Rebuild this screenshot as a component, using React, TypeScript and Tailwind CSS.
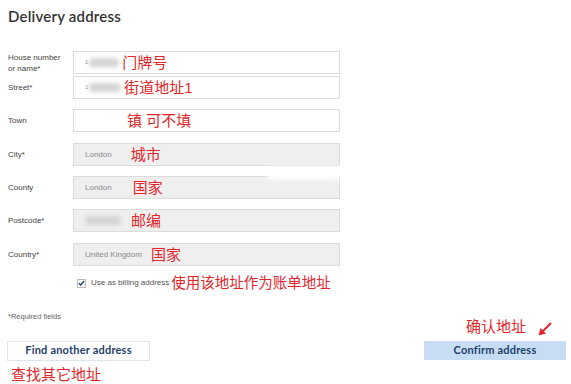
const label = 'w-[65px] shrink-0 text-[8px] leading-[11px] text-[#444]';
const box = 'w-[267px] h-[23px] border border-[#dcdcdc] flex items-center pl-[11px]';
const note = 'text-[15px] leading-none text-[#e3262b]';
const grey = 'text-[8px] text-[#8a8a8a]';
const cjk = { fontFamily: '"Noto Sans CJK SC", sans-serif' };

function Blob({ w }: { w: number }) {
  return <div className="h-[9px] rounded-sm bg-[#d4d4d4] blur-[2px]" style={{ width: w }} />;
}

export default function App() {
  return (
    <div className="relative w-[571px] h-[384px] bg-white overflow-hidden" style={{ fontFamily: '"Liberation Sans", Arial, sans-serif' }}>
      <div className="pl-2 pr-[5px] pt-[6px]">
        <h1 className="text-[15px] font-semibold text-[#333] leading-5 tracking-[0.2px]" style={{ fontFamily: 'Lato, sans-serif' }}>Delivery address</h1>

        <div className="mt-[25px] flex flex-col" style={{ fontFamily: '"Liberation Sans", "Noto Sans CJK SC", sans-serif' }}>
          <div className="flex items-center">
            <div className={label}>House number<br />or name*</div>
            <div className={`${box} bg-white`}>
              <span className="text-[6px] text-[#999] mr-[1px]">1</span>
              <Blob w={30} />
              <span className={`${note} ml-[3px]`}>门牌号</span>
            </div>
          </div>
          <div className="flex items-center mt-[2px]">
            <div className={label}>Street*</div>
            <div className={`${box} bg-white`}>
              <span className="text-[6px] text-[#999] mr-[1px]">1</span>
              <Blob w={32} />
              <span className={`${note} ml-[3px]`}>街道地址1</span>
            </div>
          </div>
          <div className="flex items-center mt-[10px]">
            <div className={label}>Town</div>
            <div className={`${box} bg-white pl-[53px]`}>
              <span className={note}>镇 可不填</span>
            </div>
          </div>
          <div className="flex items-center mt-[11px]">
            <div className={label}>City*</div>
            <div className={`${box} bg-[#efefef]`}>
              <span className={grey}>London</span>
              <span className={`${note} ml-[19px]`}>城市</span>
            </div>
          </div>
          <div className="flex items-center mt-[10px]">
            <div className={label}>County</div>
            <div className={`${box} bg-[#efefef]`}>
              <span className={grey}>London</span>
              <span className={`${note} ml-[21px]`}>国家</span>
            </div>
          </div>
          <div className="flex items-center mt-[10px]">
            <div className={label}>Postcode*</div>
            <div className={`${box} bg-[#efefef]`}>
              <Blob w={36} />
              <span className={`${note} ml-[10px]`}>邮编</span>
            </div>
          </div>
          <div className="flex items-center mt-[11px]">
            <div className={label}>Country*</div>
            <div className={`${box} bg-[#efefef]`}>
              <span className={grey}>United Kingdom</span>
              <span className={`${note} ml-[9px]`}>国家</span>
            </div>
          </div>

          <div className="flex items-center ml-[69px] mt-[10px]">
            <div className="w-[9px] h-[9px] border border-[#bbb] bg-white flex items-center justify-center">
              <svg width="7" height="6" viewBox="0 0 7 6"><path d="M0.8 3.2 L2.6 4.9 L6.2 1" fill="none" stroke="#24426e" strokeWidth="1.4" /></svg>
            </div>
            <span className="text-[8px] text-[#555] ml-[5px]">Use as billing address</span>
            <span className="text-[14.5px] leading-none text-[#e3262b] ml-[2px]">使用该地址作为账单地址</span>
          </div>
        </div>

        {/* required note + confirm annotation */}
        <div className="mt-[20px] h-[30px] flex justify-between items-start">
          <div className="text-[7.5px] text-[#666]">*Required fields</div>
          <div className="flex items-end mt-[7px] mr-[13px]">
            <span className={`${note} text-[14px]`} style={cjk}>确认地址</span>
            <svg className="ml-[11px] mb-[-4px]" width="16" height="16" viewBox="0 0 16 16">
              <path d="M14 2 L5 11" stroke="#e3262b" strokeWidth="2" />
              <path d="M1.5 14.5 L9 12.5 L3.5 7 Z" fill="#e3262b" />
            </svg>
          </div>
        </div>

        <div className="flex justify-between items-start" style={{ fontFamily: 'Lato, sans-serif' }}>
          <button className="w-[143px] h-[20px] border border-[#dfe5ec] bg-white text-[11px] font-bold text-[#1e3f6b] tracking-[0.2px] -ml-[1px]">Find another address</button>
          <button className="w-[142px] h-[19px] bg-[#c7ddf3] text-[11px] font-bold text-[#1e3f6b] tracking-[0.2px]">Confirm address</button>
        </div>
        <div className={`${note} mt-[5px] ml-[3px]`} style={cjk}>查找其它地址</div>
      </div>
      <div className="absolute left-[268px] top-[166px] w-[72px] h-[14px] bg-white blur-[2px]" />
    </div>
  );
}
